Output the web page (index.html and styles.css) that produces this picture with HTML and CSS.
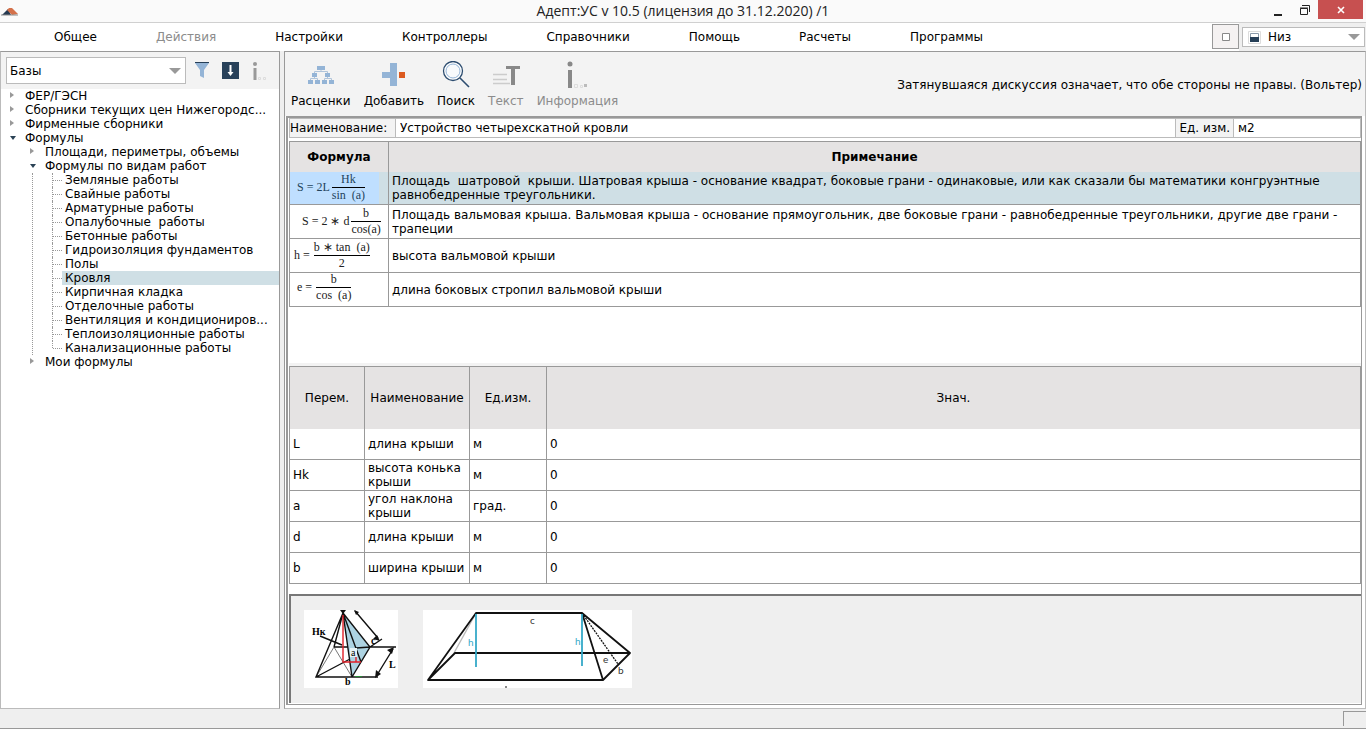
FILE: index.html
```html
<!DOCTYPE html>
<html lang="ru">
<head>
<meta charset="utf-8">
<title>Адепт:УС v 10.5</title>
<link rel="stylesheet" href="styles.css">
</head>
<body>
<div class="app">
  <header class="titlebar">
    <svg class="logo" width="18" height="8" viewBox="0 0 18 8"><path d="M1 7 7 1l3 6z" fill="#263b52"/><path d="M6 2 8 0h3l6 6-6 1z" fill="#d4714a"/><path d="M0 7h17" stroke="#888" /></svg>
    <h1 class="title">Адепт:УС v 10.5 (лицензия до 31.12.2020) /1</h1>
    <div class="window-buttons">
      <button class="win" aria-label="Свернуть"><svg width="8" height="14" viewBox="0 0 8 14"><path d="M0 12h8" stroke="#222" stroke-width="2"/></svg></button>
      <button class="win" aria-label="Развернуть"><svg width="10" height="10" viewBox="0 0 10 10"><path d="M.5 3.5h7v6h-7zM0 3h8M2 .5h7.5V7" fill="none" stroke="#222"/></svg></button>
      <button class="win close" aria-label="Закрыть"><svg width="8" height="8" viewBox="0 0 8 8"><path d="m1 1 6 6M7 1 1 7" stroke="#fff" stroke-width="1.6"/></svg></button>
    </div>
  </header>

  <div class="menubar">
    <nav class="menu">
      <button>Общее</button><button disabled>Действия</button><button>Настройки</button><button>Контроллеры</button><button>Справочники</button><button>Помощь</button><button>Расчеты</button><button>Программы</button>
    </nav>
    <button class="square" aria-label="Панель"><svg width="8" height="8" viewBox="0 0 8 8"><path d="M.5.5h7v7h-7z" fill="#fff" stroke="#888"/></svg></button>
    <div class="dock">
      <div class="combo dock-combo">
        <svg class="combo-icon" width="13" height="13" viewBox="0 0 13 13"><path d="M.5.5h12v12H.5z" fill="#fff" stroke="#ddd"/><path d="M2.500 2.500h8v8h-8z" fill="#fff" stroke="#8a9aaa"/><path d="M2 6h9v5H2z" fill="#263f57"/></svg>
        <select aria-label="Расположение"><option>Низ</option></select>
        <svg class="arrow" width="12" height="6" viewBox="0 0 12 6"><path d="M0 0h12L6 6z" fill="#999"/></svg>
      </div>
    </div>
  </div>

  <main class="workspace">
    <aside class="sidebar">
      <div class="side-tools">
        <div class="combo">
          <select aria-label="Раздел"><option>Базы</option></select>
          <svg class="arrow" width="12" height="6" viewBox="0 0 12 6"><path d="M0 0h12L6 6z" fill="#999"/></svg>
        </div>
        <button aria-label="Фильтр"><svg width="14" height="17" viewBox="0 0 14 17"><path d="M0 1h14L9 8v8l-4-2V8z" fill="#94b4d6"/><path d="M0 .5h14" stroke="#263f57"/></svg></button>
        <button aria-label="Загрузить"><svg width="17" height="17" viewBox="0 0 17 17"><path d="M0 0h17v17H0z" fill="#28415a"/><path d="M7.500 3h2v7h2l-3 4-3-4h2z" fill="#fff"/></svg></button>
        <button aria-label="Сведения"><svg width="14" height="18" viewBox="0 0 14 18"><circle cx="3" cy="2" r="2" fill="#999"/><path d="M1.500 6h3v12h-3z" fill="#999"/><path d="M6.500 15.500h2v2h-2zM11.500 15.500h2v2h-2z" fill="none" stroke="#ddd"/></svg></button>
      </div>
      <ul class="tree">
        <li><span class="node closed">ФЕР/ГЭСН</span></li>
        <li><span class="node closed">Сборники текущих цен Нижегородс...</span></li>
        <li><span class="node closed">Фирменные сборники</span></li>
        <li><span class="node open">Формулы</span>
          <ul>
            <li><span class="node closed">Площади, периметры, объемы</span></li>
            <li><span class="node open">Формулы по видам работ</span>
              <ul class="leaves">
                <li><span class="node leaf">Земляные работы</span></li>
                <li><span class="node leaf">Свайные работы</span></li>
                <li><span class="node leaf">Арматурные работы</span></li>
                <li><span class="node leaf">Опалубочные&nbsp; работы</span></li>
                <li><span class="node leaf">Бетонные работы</span></li>
                <li><span class="node leaf">Гидроизоляция фундаментов</span></li>
                <li><span class="node leaf">Полы</span></li>
                <li><span class="node leaf selected">Кровля</span></li>
                <li><span class="node leaf">Кирпичная кладка</span></li>
                <li><span class="node leaf">Отделочные работы</span></li>
                <li><span class="node leaf">Вентиляция и кондициониров...</span></li>
                <li><span class="node leaf">Теплоизоляционные работы</span></li>
                <li><span class="node leaf">Канализационные работы</span></li>
              </ul>
            </li>
            <li><span class="node closed">Мои формулы</span></li>
          </ul>
        </li>
      </ul>
    </aside>

    <section class="content">
      <div class="toolbar">
        <div class="tools">
          <button><svg width="28" height="28" viewBox="0 0 28 28"><g fill="#94b4d6"><path d="M10 5h8v4h-8zM5 12h5v4H5zM18 12h5v4h-5zM1 19h5v4H1zM8 19h5v4H8zM15 19h5v4h-5zM22 19h5v4h-5z"/></g><path d="M14 9v1.500M7.500 12v-1.500h13V12M7.500 16v1.500M3.500 19v-1.500h7V19M20.500 16v1.500M17.500 19v-1.500h7V19" fill="none" stroke="#b0c4da"/></svg>Расценки</button>
          <button><svg width="28" height="28" viewBox="0 0 28 28"><path d="M10 2h7v23h-7v-8H2v-6h8z" fill="#94b4d6"/><path d="M19 11h6v6h-6z" fill="#dc5a20"/></svg>Добавить</button>
          <button><svg width="28" height="28" viewBox="0 0 28 28"><circle cx="11" cy="10" r="9.500" fill="#fff" stroke="#2d4d70" stroke-width="1.300"/><circle cx="11" cy="10" r="7" fill="#f8fafc" stroke="#94b4d6"/><path d="m18 17 9 9" stroke="#2d4d70" stroke-width="1.600"/></svg>Поиск</button>
          <button disabled><svg width="28" height="28" viewBox="0 0 28 28"><path d="M1 13.500h14M1 18.500h14M1 22.500h17" stroke="#ccc" stroke-width="1.500"/><path d="M14 5h14v3h-5v16h-4V8h-5z" fill="#888"/></svg>Текст</button>
          <button disabled><svg width="28" height="28" viewBox="0 0 28 28"><circle cx="7" cy="3" r="2.500" fill="#888"/><path d="M5 9h4v18H5z" fill="#888"/><path d="M11.500 23.500h3v3h-3zM17.500 24.500h2v2h-2z" fill="none" stroke="#ddd"/><path d="M21 23h3v3h-3z" fill="#bbb"/></svg>Информация</button>
        </div>
        <p class="quote">Затянувшаяся дискуссия означает, что обе стороны не правы. (Вольтер)</p>
      </div>

      <div class="frame">
        <form class="fields">
          <label class="name-label" for="name">Наименование:</label><input id="name" class="name" value="Устройство четырехскатной кровли">
          <label class="unit-label" for="unit">Ед. изм.</label><input id="unit" class="unit" value="м2">
        </form>

        <div class="pane">
          <table class="formulas">
            <thead><tr><th class="col-formula">Формула</th><th>Примечание</th></tr></thead>
            <tbody>
              <tr class="current"><td class="cell-formula"><div class="formula f1"><span>S = 2L</span><span class="frac"><span>Hk</span><span>sin &nbsp;(a)</span></span></div></td><td>Площадь&nbsp; шатровой&nbsp; крыши. Шатровая крыша - основание квадрат, боковые грани - одинаковые, или как сказали бы математики конгруэнтные равнобедренные треугольники.</td></tr>
              <tr><td class="cell-formula"><div class="formula f2"><span>S = 2 ∗ d</span><span class="frac"><span>b</span><span>cos(a)</span></span></div></td><td>Площадь вальмовая крыша. Вальмовая крыша - основание прямоугольник, две боковые грани - равнобедренные треугольники, другие две грани - трапеции</td></tr>
              <tr><td class="cell-formula"><div class="formula f3"><span>h =</span><span class="frac"><span>b ∗ tan &nbsp;(a)</span><span>2</span></span></div></td><td>высота вальмовой крыши</td></tr>
              <tr><td class="cell-formula"><div class="formula f4"><span>e =</span><span class="frac"><span>b</span><span>cos &nbsp;(a)</span></span></div></td><td>длина боковых стропил вальмовой крыши</td></tr>
            </tbody>
          </table>
        </div>

        <table class="variables">
          <thead><tr><th class="v1">Перем.</th><th class="v2">Наименование</th><th class="v3">Ед.изм.</th><th>Знач.</th></tr></thead>
          <tbody>
            <tr><td>L</td><td>длина крыши</td><td>м</td><td>0</td></tr>
            <tr><td>Hk</td><td>высота конька крыши</td><td>м</td><td>0</td></tr>
            <tr><td>a</td><td>угол наклона крыши</td><td>град.</td><td>0</td></tr>
            <tr><td>d</td><td>длина крыши</td><td>м</td><td>0</td></tr>
            <tr><td>b</td><td>ширина крыши</td><td>м</td><td>0</td></tr>
          </tbody>
        </table>

        <div class="drawings">
          <svg width="94" height="78" viewBox="0 0 94 78">
            <path d="M0 0h94v78H0z" fill="#fff"/>
            <path d="M39 3 66 37 48 67z" fill="#add3e2"/>
            <path d="M30 37 12 67M30 37 48 67" fill="none" stroke="#777"/>
            <path d="M39 3 30 37M39 3 12 67 48 67 39 3 66 37 48 67M39 3 57 52M30 37h14M52 38 66 37h26M12 67h62M12 67 46 49M16 26 38 35M66 37 78 29" fill="none" stroke="#111" stroke-width="1.400"/>
            <path d="M39 5v47h18M52 52v-8" fill="none" stroke="#e02028" stroke-width="1.400"/>
            <path d="M51 1 74 28M89 39 73 65" stroke="#111" stroke-width="1.400"/>
            <path d="m50 0 5 2-3 3zM76 31l-7-2 4-4zM90 37l-7 3 5 4zM71 68l1-8 5 4zM36 0h6l-3 4z" fill="#111"/>
            <path d="M51 66.500h7" stroke="#278a35"/><path d="M46 38h7v9h-7z" fill="#e5f2f5"/>
            <g class="bold"><text x="8" y="25">Нк</text><text x="67" y="34">c</text><text x="47" y="46" class="thin">a</text><text x="85" y="58">L</text><text x="41" y="75">b</text></g>
          </svg>
          <svg width="209" height="78" viewBox="0 0 209 78">
            <path d="M0 0h209v78H0z" fill="#fff"/>
            <path d="M53 3 31 43" stroke="#bbb" stroke-width="1.400"/>
            <path d="M5 70 53 3h106l48 40-27 27zM5 70l27-27h175M159 3l21 67" fill="none" stroke="#111" stroke-width="1.800" stroke-linejoin="round"/>
            <path d="m159 3 36 51" stroke="#111" stroke-width="1.300" stroke-dasharray="2 1"/>
            <path d="M53 4v53M159 4v52" stroke="#36a9c8" stroke-width="1.800"/>
            <path d="M82 77h2" stroke="#111"/>
            <g class="plain"><text x="107" y="14">c</text><text x="45" y="36" class="cyan">h</text><text x="152" y="35" class="cyan">h</text><text x="180" y="53">e</text><text x="195" y="64">b</text></g>
          </svg>
        </div>
      </div>
    </section>
  </main>

  <footer class="statusbar"><div class="status-cell"></div></footer>
</div>
</body>
</html>
```
FILE: styles.css
```css
* { box-sizing: border-box; }
body { margin: 0; font: 12px/14px "DejaVu Sans", Verdana, sans-serif; color: #000; background: #fff; }
button, input, select { font: inherit; color: inherit; }
button { border: 0; padding: 0; background: none; }
button:disabled { color: #8c8c8c; }
svg { display: block; flex: none; }
.app { display: flex; flex-direction: column; min-height: 100vh; padding-bottom: 3px; }

.titlebar { display: flex; height: 23px; background: #fafafa; border-bottom: 1px solid #d0d0d0; position: relative; justify-content: space-between; }
.logo { margin: 8px 0 0 1px; }
.title { position: absolute; inset: 0; margin: 0; text-align: center; font: 14px/22px "Open Sans", sans-serif; color: #222; }
.window-buttons { display: flex; height: 19px; margin-right: 3px; z-index: 1; }
.win { display: flex; width: 27px; align-items: center; justify-content: center; }
.win.close { width: 45px; background: #c75050; }

.menubar { display: flex; height: 28px; }
.menu { display: flex; flex: 1; gap: 59px; padding-left: 54px; }
.square { display: flex; align-items: center; justify-content: center; width: 27px; height: 25px; margin: 1px 0; background: #f5f2f2; border: 1px solid #999; }
.dock { width: 127px; padding: 4px 1px 4px 3px; background: #efefef; }
.combo { display: flex; align-items: center; position: relative; background: #fff; border: 1px solid #bbb; }
.combo select { appearance: none; flex: 1; min-width: 0; height: 100%; border: 0; padding: 0 3px; background: none; }
.combo .arrow { position: absolute; right: 4px; pointer-events: none; }
.dock-combo { height: 20px; padding-left: 5px; }
.dock-combo select { padding-left: 7px; }

.workspace { display: flex; flex: 1; gap: 4px; background: #efefef; }
.sidebar { width: 280px; flex: none; border: 1px solid #bbb; border-top-color: #999; border-right-color: #999; background: #fff; }
.side-tools { display: flex; align-items: center; height: 37px; padding-left: 5px; background: #f3f3f3; }
.side-tools .combo { width: 181px; height: 27px; margin-right: 9px; }
.side-tools button { margin-right: 13px; }

.tree, .tree ul { list-style: none; margin: 0; padding: 0; }
.tree ul { padding-left: 20px; }
.tree li { position: relative; }
.node { display: block; margin-left: 21px; padding-left: 3px; white-space: nowrap; height: 14px; }
.closed::before, .open::before { content: ""; position: absolute; left: 9px; top: 3px; border: 3px solid transparent; border-left: 4px solid #999; }
.open::before { top: 5px; border: 3px solid transparent; border-top: 4px solid #2b4255; border-bottom: 0; }
.selected { background: #cfdfe5; }
.leaves::before { content: ""; position: absolute; left: 11px; top: 14px; bottom: 0; border-left: 1px dotted #999; }
.leaves li::before { content: ""; position: absolute; left: 11px; top: 0; height: 14px; border-left: 1px dotted #999; }
.leaves li:last-child::before { height: 7px; }
.leaves li::after { content: ""; position: absolute; left: 12px; top: 7px; width: 9px; border-top: 1px dotted #999; }

.content { display: flex; flex-direction: column; flex: 1; min-width: 0; padding: 0 3px 3px 1px; border: 1px solid #bbb; border-left-color: #999; border-top-color: #999; background: #fff; }
.toolbar { display: flex; justify-content: space-between; align-items: center; height: 64px; margin-right: -3px; margin-left: -1px; padding: 1px 3px 0 6px; background: #f3f3f3; }
.tools { display: flex; gap: 13px; }
.tools button { display: flex; flex-direction: column; align-items: center; gap: 5px; }
.quote { margin: 0; white-space: nowrap; }

.frame { display: flex; flex-direction: column; flex: 1; border: 1px solid #999; border-width: 2px 1px 1px 2px; padding: 0 0 1px 1px; }
.fields { display: flex; height: 20px; margin-bottom: 3px; border: 1px solid #bbb; background: #f3f3f3; line-height: 18px; }
.name-label { width: 105px; }
.unit-label { padding: 0 3px; }
.fields input { border: 0; border-left: 1px solid #bbb; border-right: 1px solid #bbb; padding: 0 4px; background: #fff; min-width: 0; }
.fields .name { flex: 1; }
.fields .unit { width: 127px; border-right: 0; }

.pane { flex: 1; border-bottom: 3px solid #f3f3f3; }
table { width: 100%; table-layout: fixed; border-collapse: collapse; border-right: 1px solid #999; }
th { background: #e5e3e3; border: 1px solid #999; border-bottom: 0; }
td { border: 1px solid #999; padding: 0 3px; }
tbody tr:first-child td { border-top: 0; }
.formulas th { height: 30px; padding: 0; }
.formulas td { height: 34px; }
.formulas .current td { height: 33px; }
.col-formula { width: 99px; }
.current { background: #cfdfe5; }
.formulas .cell-formula { padding: 0; }
.formula { display: flex; align-items: center; gap: 2px; height: 32px; padding-left: 7px; font: 12px/15px "Liberation Serif", serif; color: #222; white-space: nowrap; }
.f1 { width: 89px; background: #bfdfff; color: #24445c; }
.f2 { padding-left: 12px; }
.f3 { padding-left: 4px; gap: 4px; }
.f4 { gap: 4px; padding-bottom: 4px; }
.frac { text-align: center; }
.frac span { display: block; }
.frac span + span { border-top: 1px solid #000; }

.variables th { height: 62px; font-weight: normal; padding: 0; }
.variables td { height: 31px; }
.v1 { width: 75px; }
.v2 { width: 105px; }
.v3 { width: 77px; }

.drawings { display: flex; gap: 25px; height: 109px; margin-top: 10px; padding: 14px 13px; background: #efefef; border: 0 solid #777; border-width: 2px 0 0 2px; }
.bold { font: bold 10px "Liberation Serif", serif; }
.thin { font-weight: normal; }
.plain { font: 10px Lato, sans-serif; fill: #333; }
.plain .cyan { fill: #36a9c8; }

.statusbar { display: flex; justify-content: flex-end; height: 20px; padding-top: 2px; background: #efefef; border-bottom: 1px solid #999; }
.status-cell { width: 23px; height: 15px; border: 1px solid #999; border-width: 1px 0 0 1px; }
```
